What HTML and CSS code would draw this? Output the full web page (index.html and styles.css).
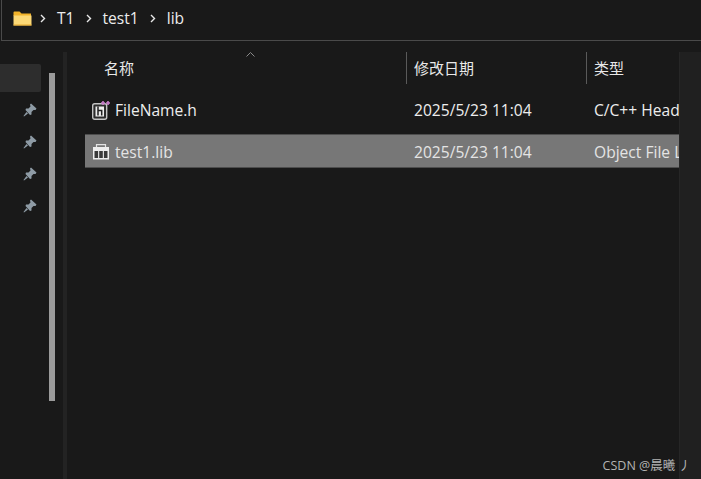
FILE: index.html
```html
<!DOCTYPE html>
<html lang="zh-CN">
<head>
  <meta charset="UTF-8" />
  <title>lib</title>
  <link rel="stylesheet" href="styles.css">
</head>
<body>
  <header class="address-bar">
    <svg class="folder-icon" width="19" height="15" viewBox="0 0 19 15">
      <path d="M0.5 1.5 Q0.5 0.5 1.5 0.5 H6.5 L8.5 2.5 H18 V5 H0.5 Z" fill="#f2b32a"/>
      <path d="M0.5 4.5 H18.5 V14.5 H0.5 Z" fill="#fcd976"/>
      <path d="M0.5 13.5 H18.5 V14.5 H0.5 Z" fill="#e6a92c"/>
    </svg>
    <svg class="crumb-sep" width="6" height="9" viewBox="0 0 6 9"><path d="M1 1 L4.5 4.5 L1 8" fill="none" stroke="#e8e8e8" stroke-width="1.4"/></svg>
    <span class="crumb">T1</span>
    <svg class="crumb-sep" width="6" height="9" viewBox="0 0 6 9"><path d="M1 1 L4.5 4.5 L1 8" fill="none" stroke="#e8e8e8" stroke-width="1.4"/></svg>
    <span class="crumb">test1</span>
    <svg class="crumb-sep" width="6" height="9" viewBox="0 0 6 9"><path d="M1 1 L4.5 4.5 L1 8" fill="none" stroke="#e8e8e8" stroke-width="1.4"/></svg>
    <span class="crumb">lib</span>
  </header>

  <div class="explorer">
    <aside class="sidebar">
      <div class="nav-list">
        <div class="nav-item selected"></div>
        <div class="nav-item"><svg class="pin" viewBox="0 0 14 14"><path d="M8 0.5 L13.5 5.5 L12.5 7 L10.5 7 L8.5 9 L8.5 11.5 L7 12 L2.5 7 L3 5.5 L5.5 5.5 L7.5 3.5 L7 1.5 Z M3.5 9 L5 10.5 L1 13.5 L0.5 13 Z" fill="#8e9ba5"/></svg></div>
        <div class="nav-item"><svg class="pin" viewBox="0 0 14 14"><path d="M8 0.5 L13.5 5.5 L12.5 7 L10.5 7 L8.5 9 L8.5 11.5 L7 12 L2.5 7 L3 5.5 L5.5 5.5 L7.5 3.5 L7 1.5 Z M3.5 9 L5 10.5 L1 13.5 L0.5 13 Z" fill="#8e9ba5"/></svg></div>
        <div class="nav-item"><svg class="pin" viewBox="0 0 14 14"><path d="M8 0.5 L13.5 5.5 L12.5 7 L10.5 7 L8.5 9 L8.5 11.5 L7 12 L2.5 7 L3 5.5 L5.5 5.5 L7.5 3.5 L7 1.5 Z M3.5 9 L5 10.5 L1 13.5 L0.5 13 Z" fill="#8e9ba5"/></svg></div>
        <div class="nav-item"><svg class="pin" viewBox="0 0 14 14"><path d="M8 0.5 L13.5 5.5 L12.5 7 L10.5 7 L8.5 9 L8.5 11.5 L7 12 L2.5 7 L3 5.5 L5.5 5.5 L7.5 3.5 L7 1.5 Z M3.5 9 L5 10.5 L1 13.5 L0.5 13 Z" fill="#8e9ba5"/></svg></div>
      </div>
      <div class="nav-scroll"><div class="nav-thumb"></div></div>
    </aside>
    <div class="splitter"></div>

    <main class="files">
      <div class="col-head">
        <div class="col col-name">名称<svg class="sort-arrow" width="9" height="5" viewBox="0 0 9 5"><path d="M0.5 4.5 L4.5 0.5 L8.5 4.5" fill="none" stroke="#8a8a8a"/></svg></div>
        <div class="col col-date">修改日期</div>
        <div class="col col-type">类型</div>
      </div>

      <div class="file-row">
        <div class="col col-name">
          <svg class="file-icon" width="18" height="20" viewBox="0 0 18 20">
            <rect x="0.7" y="3.7" width="14" height="15.6" rx="2" fill="#2c2c2c" stroke="#c4c4c4" stroke-width="1.4"/>
            <rect x="3.5" y="6.5" width="8.5" height="10" fill="#ededed"/>
            <path d="M6 6.5 V15.5 M6 10.5 H9.7 V15.5" fill="none" stroke="#202020" stroke-width="1.5"/>
            <path d="M9 3 H13 M11 1 V5 M14 3 H18 M16 1 V5" fill="none" stroke="#c77cc9" stroke-width="1.6"/>
          </svg>
          <span>FileName.h</span>
        </div>
        <div class="col col-date">2025/5/23 11:04</div>
        <div class="col col-type">C/C++ Header</div>
      </div>

      <div class="file-row active">
        <div class="col col-name">
          <svg class="file-icon" width="18" height="16" viewBox="0 0 17 16">
            <path d="M4 3 V0.7 H13 V3" fill="none" stroke="#e4e4e4" stroke-width="1.2"/>
            <rect x="0.5" y="3" width="16" height="12.5" fill="#eeeeee"/>
            <rect x="2" y="7" width="3.6" height="7" fill="#3a3a3a"/>
            <rect x="6.7" y="7" width="3.6" height="7" fill="#3a3a3a"/>
            <rect x="11.4" y="7" width="3.6" height="7" fill="#3a3a3a"/>
          </svg>
          <span>test1.lib</span>
        </div>
        <div class="col col-date">2025/5/23 11:04</div>
        <div class="col col-type">Object File Library</div>
      </div>
    </main>

    <div class="right-scroll"></div>
  </div>

  <div class="watermark">CSDN @晨曦 丿</div>
</body>
</html>
```
FILE: styles.css
```css
html, body {
  height: 100%;
}

body {
  margin: 0;
  background: #191919;
  color: #f0f0f0;
  font-family: "Open Sans", "Noto Sans CJK SC", sans-serif;
  font-size: 15.6px;
  overflow: hidden;
  display: flex;
  flex-direction: column;
  position: relative;
}

.address-bar {
  height: 36px;
  margin-left: 1px;
  padding-bottom: 4px;
  border-left: 1px solid #4a4a4a;
  border-bottom: 1px solid #4a4a4a;
  display: flex;
  align-items: center;
  padding-left: 11px;
  flex-shrink: 0;
}

.folder-icon {
  margin-right: 8px;
}

.crumb {
  margin: 0 11px;
  color: #ececec;
}

.explorer {
  flex: 1;
  display: flex;
  margin-top: 11px;
  min-height: 0;
}

.sidebar {
  width: 63px;
  display: flex;
  flex-shrink: 0;
}

.nav-list {
  width: 41px;
  padding-top: 12px;
  margin-right: 8px;
}

.nav-item {
  height: 32px;
  display: flex;
  align-items: center;
  justify-content: flex-end;
  padding-right: 4px;
}

.nav-item.selected {
  height: 28px;
  margin-bottom: 2px;
  background: #2d2d2d;
  border-radius: 0 2px 2px 0;
}

.pin {
  width: 14px;
  height: 14px;
}

.nav-scroll {
  width: 6px;
  padding-top: 21px;
}

.nav-thumb {
  height: 328px;
  background: #9b9b9b;
}

.splitter {
  width: 4px;
  background: #232323;
  flex-shrink: 0;
}

.files {
  flex: 1;
  min-width: 0;
  padding-left: 18px;
  overflow: hidden;
}

.col-head {
  display: flex;
  height: 32px;
  align-items: stretch;
  margin-bottom: 8px;
}

.col-head .col {
  display: flex;
  align-items: center;
  padding-bottom: 2px;
  font-family: "Noto Sans CJK SC", sans-serif;
  font-size: 15px;
  color: #e8e8e8;
}

.col {
  box-sizing: border-box;
  white-space: nowrap;
  flex-shrink: 0;
  padding-left: 8px;
}

.col-name {
  width: 321px;
  position: relative;
}

.col-head .col-name {
  padding-left: 19px;
}

.col-date {
  width: 180px;
}

.col-type {
  width: 93px;
  overflow: hidden;
}

.col-head .col-date,
.col-head .col-type {
  padding-left: 7px;
  border-left: 1px solid #5a5a5a;
}

.sort-arrow {
  position: absolute;
  top: 0;
  left: 161px;
}

.file-row {
  display: flex;
  align-items: center;
  height: 31px;
  padding-top: 1px;
  margin-bottom: 8px;
  border: 1px solid transparent;
  border-left: 0;
  border-right: 0;
  color: #ededed;
}

.file-row .col-name {
  display: flex;
  align-items: center;
  gap: 5px;
  padding-left: 7px;
}

.file-row.active {
  background: #777777;
  border-color: #4d4d4d;
  color: #e4e4e4;
}

.right-scroll {
  width: 22px;
  background: #202020;
  border-left: 1px solid #262626;
  box-sizing: border-box;
  flex-shrink: 0;
}

.watermark {
  position: absolute;
  right: 10px;
  bottom: 5px;
  font-size: 12.5px;
  color: #b4b4b4;
}
```
